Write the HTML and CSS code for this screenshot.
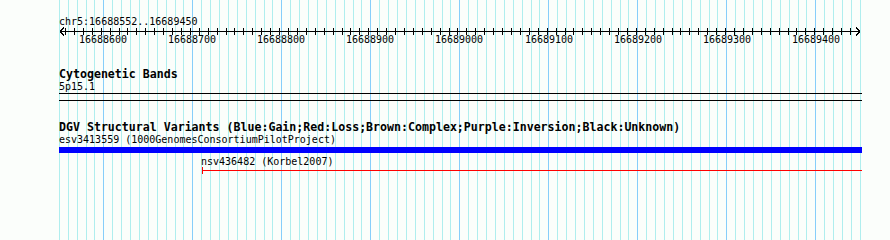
FILE: index.html
```html
<!DOCTYPE html>
<html>
<head>
	<title> chr5:16688552..16689450 </title>
	<link rel="stylesheet" href="styles.css">
</head>

<body>

<div class="panel">
	<svg id="grid" class="grid" width="890" height="240"></svg>

	<div class="tracks">
		<div class="segment">chr5:16688552..16689450</div>
		<svg id="ruler" class="ruler" width="890" height="17"></svg>

		<div class="track cyto">
			<div class="track-title">Cytogenetic Bands</div>
			<div class="label">5p15.1</div>
			<div class="band"></div>
		</div>

		<div class="track dgv">
			<div class="track-title">DGV Structural Variants (Blue:Gain;Red:Loss;Brown:Complex;Purple:Inversion;Black:Unknown)</div>
			<div class="label">esv3413559 (1000GenomesConsortiumPilotProject)</div>
			<div class="gain"></div>
			<div class="label loss-label">nsv436482 (Korbel2007)</div>
			<div class="loss"></div>
		</div>
	</div>
</div>

<script type="text/javascript">
	var svgNS = 'http://www.w3.org/2000/svg';
	var first = 16688550, last = 16689450;

	// grid position of a base
	function gridX(bp) {
		return Math.round(58.8 + (bp - first) * 0.89);
	}

	// ruler tick position of a base
	function tickX(bp) {
		return Math.round(65 + (bp - 16688560) * 0.892);
	}

	function addLine(svg, x1, y1, x2, y2, color) {
		var l = document.createElementNS(svgNS, 'line');
		l.setAttribute('x1', x1);
		l.setAttribute('y1', y1);
		l.setAttribute('x2', x2);
		l.setAttribute('y2', y2);
		l.setAttribute('stroke', color);
		svg.appendChild(l);
	}

	// vertical grid
	var grid = $('grid');
	for (var bp = first; bp <= last; bp += 10) {
		var x = gridX(bp) + 0.5;
		var color = (bp % 100 == 0) ? '#87cefa' : '#afeeee';
		addLine(grid, x, 0, x, 240, color);
	}

	// ruler: line at y=31 of the page, svg starts at 28
	var ruler = $('ruler');
	addLine(ruler, 60, 3.5, 860, 3.5, '#000');
	addLine(ruler, 60, 3.5, 64, -0.5, '#000');
	addLine(ruler, 60, 3.5, 64, 7.5, '#000');
	addLine(ruler, 860, 3.5, 856, -0.5, '#000');
	addLine(ruler, 860, 3.5, 856, 7.5, '#000');
	for (var bp = 16688560; bp < last; bp += 10) {
		var x = tickX(bp) + 0.5;
		addLine(ruler, x, 0, x, 7, '#000');
		if (bp % 100 == 0) {
			var t = document.createElementNS(svgNS, 'text');
			t.setAttribute('x', x + 1.5);
			t.setAttribute('y', 15);
			t.setAttribute('text-anchor', 'middle');
			t.textContent = bp;
			ruler.appendChild(t);
		}
	}

	function $(id) {
		return document.getElementById(id);
	}
</script>

</body>
</html>
```

FILE: styles.css
```css
body {margin: 0; background: #fbfefb; font-family: "DejaVu Sans Mono", "Liberation Mono", monospace; font-size: 10px; color: #000;}
.panel {position: relative; width: 890px; height: 240px; overflow: hidden;}
.grid {position: absolute; left: 0; top: 0; shape-rendering: crispEdges;}
.tracks {position: relative; padding-top: 15px;}
.segment {padding-left: 59px; height: 13px; line-height: 13px;}
.ruler {display: block; overflow: visible; shape-rendering: crispEdges; font-size: 10px;}
.ruler text {fill: #000;}
.track {padding-left: 59px;}
.cyto {margin-top: 23px;}
.dgv {margin-top: 20px;}
.track-title {font-weight: bold; font-size: 11.6px; height: 12px; line-height: 12px; white-space: nowrap;}
.label {height: 13px; line-height: 13px; white-space: nowrap;}
.band {width: 803px; height: 6px; border-top: 1px solid #000; border-bottom: 1px solid #000;}
.gain {width: 803px; height: 6px; margin-top: 1px; background: #0000ff;}
.loss-label {margin-top: 2px; margin-left: 142px; height: 12px;}
.loss {width: 659px; height: 7px; margin-left: 143px; border-left: 1px solid #ff0000; background: linear-gradient(#ff0000, #ff0000) center / 100% 1px no-repeat;}
```
